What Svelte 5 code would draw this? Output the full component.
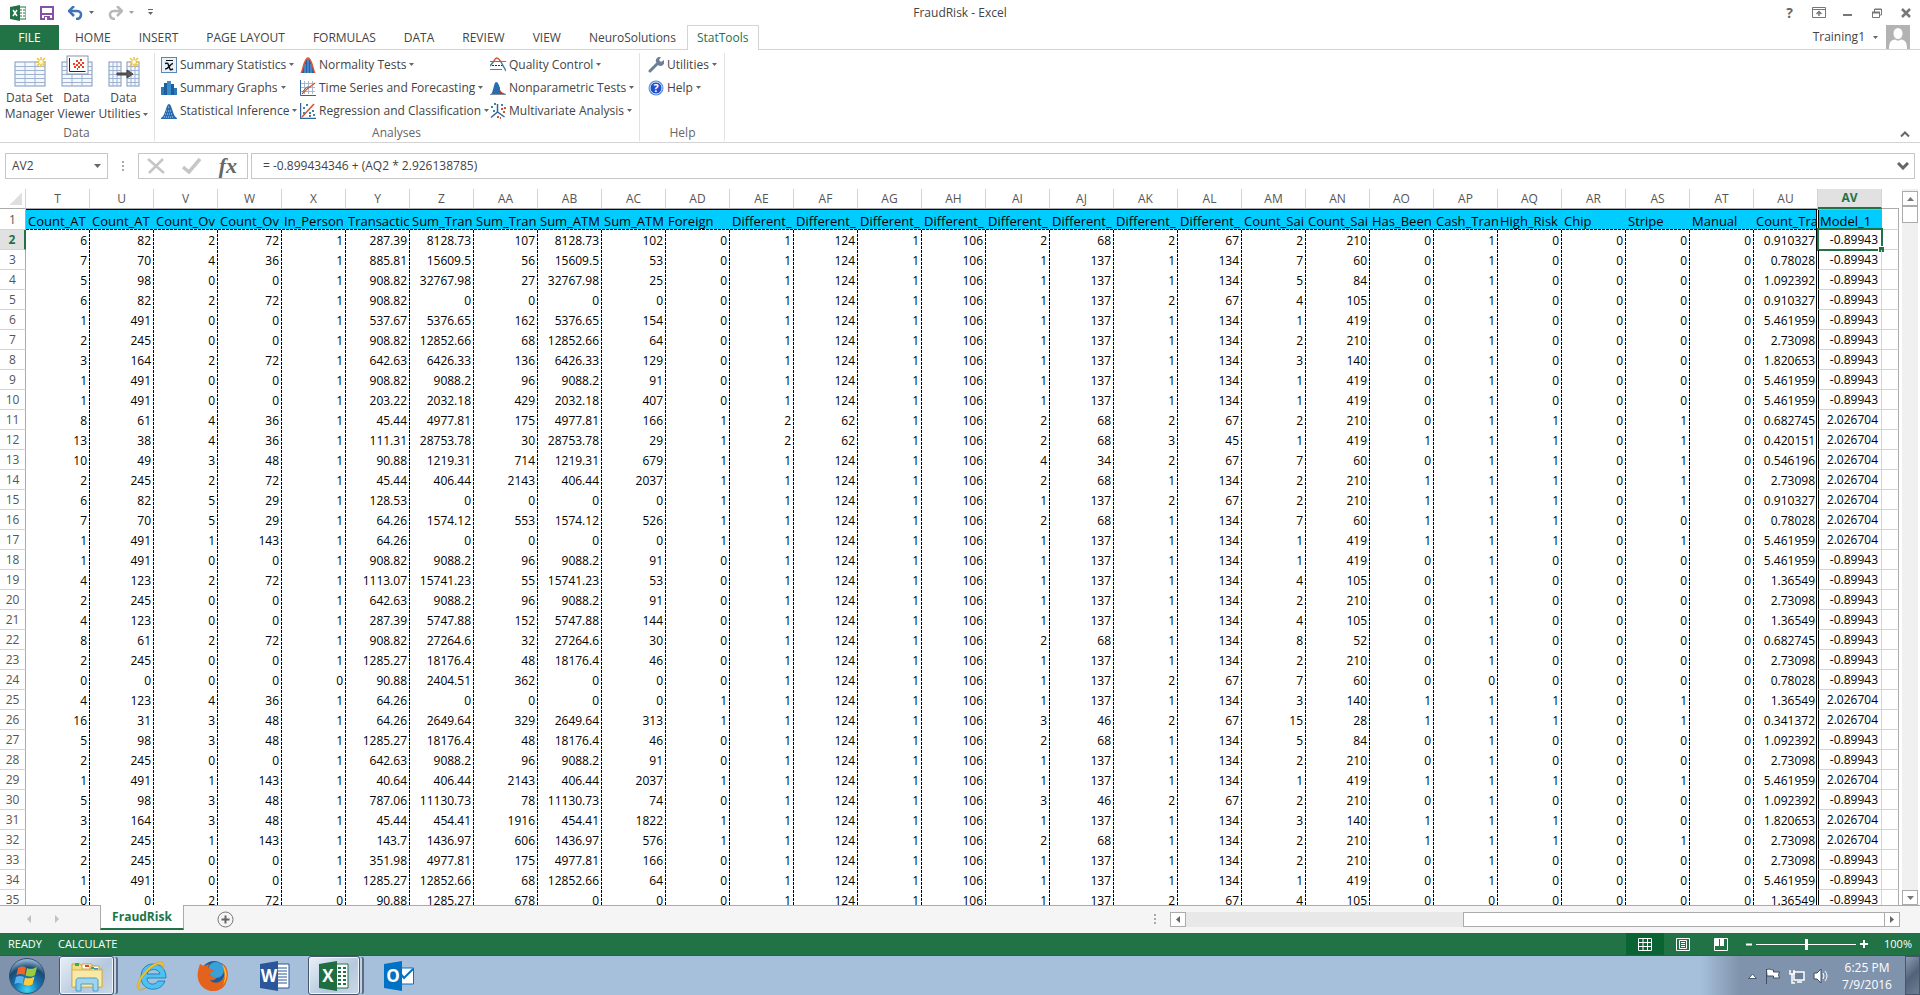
<script lang="ts">
type Tool = { label: string; icon: string };

const tabs = ['HOME', 'INSERT', 'PAGE LAYOUT', 'FORMULAS', 'DATA', 'REVIEW', 'VIEW', 'NeuroSolutions', 'StatTools'];
const activeTab = 'StatTools';

const dataTools = [
	{ lines: ['Data Set', 'Manager'], icon: 'sheet', menu: false },
	{ lines: ['Data', 'Viewer'], icon: 'viewer', menu: false },
	{ lines: ['Data', 'Utilities'], icon: 'convert', menu: true },
];

const analyses: Tool[][] = [
	[
		{ label: 'Summary Statistics', icon: 'mean' },
		{ label: 'Summary Graphs', icon: 'histogram' },
		{ label: 'Statistical Inference', icon: 'inference' },
	],
	[
		{ label: 'Normality Tests', icon: 'normal' },
		{ label: 'Time Series and Forecasting', icon: 'series' },
		{ label: 'Regression and Classification', icon: 'regression' },
	],
	[
		{ label: 'Quality Control', icon: 'quality' },
		{ label: 'Nonparametric Tests', icon: 'nonparam' },
		{ label: 'Multivariate Analysis', icon: 'multi' },
	],
];

const helpTools: Tool[] = [
	{ label: 'Utilities', icon: 'wrench' },
	{ label: 'Help', icon: 'help' },
];

const columns = 'T U V W X Y Z AA AB AC AD AE AF AG AH AI AJ AK AL AM AN AO AP AQ AR AS AT AU AV'.split(' ');
const names =
	'Count_AT Count_AT Count_Ov Count_Ov In_Person Transactic Sum_Tran Sum_Tran Sum_ATM Sum_ATM Foreign Different_ Different_ Different_ Different_ Different_ Different_ Different_ Different_ Count_Sai Count_Sai Has_Been Cash_Tran High_Risk Chip Stripe Manual Count_Tra Model_1'.split(' ');

const rows = `
6 82 2 72 1 287.39 8128.73 107 8128.73 102 0 1 124 1 106 2 68 2 67 2 210 0 1 0 0 0 0 0.910327 -0.89943
7 70 4 36 1 885.81 15609.5 56 15609.5 53 0 1 124 1 106 1 137 1 134 7 60 0 1 0 0 0 0 0.78028 -0.89943
5 98 0 0 1 908.82 32767.98 27 32767.98 25 0 1 124 1 106 1 137 1 134 5 84 0 1 0 0 0 0 1.092392 -0.89943
6 82 2 72 1 908.82 0 0 0 0 0 1 124 1 106 1 137 2 67 4 105 0 1 0 0 0 0 0.910327 -0.89943
1 491 0 0 1 537.67 5376.65 162 5376.65 154 0 1 124 1 106 1 137 1 134 1 419 0 1 0 0 0 0 5.461959 -0.89943
2 245 0 0 1 908.82 12852.66 68 12852.66 64 0 1 124 1 106 1 137 1 134 2 210 0 1 0 0 0 0 2.73098 -0.89943
3 164 2 72 1 642.63 6426.33 136 6426.33 129 0 1 124 1 106 1 137 1 134 3 140 0 1 0 0 0 0 1.820653 -0.89943
1 491 0 0 1 908.82 9088.2 96 9088.2 91 0 1 124 1 106 1 137 1 134 1 419 0 1 0 0 0 0 5.461959 -0.89943
1 491 0 0 1 203.22 2032.18 429 2032.18 407 0 1 124 1 106 1 137 1 134 1 419 0 1 0 0 0 0 5.461959 -0.89943
8 61 4 36 1 45.44 4977.81 175 4977.81 166 1 2 62 1 106 2 68 2 67 2 210 0 1 1 0 1 0 0.682745 2.026704
13 38 4 36 1 111.31 28753.78 30 28753.78 29 1 2 62 1 106 2 68 3 45 1 419 1 1 1 0 1 0 0.420151 2.026704
10 49 3 48 1 90.88 1219.31 714 1219.31 679 1 1 124 1 106 4 34 2 67 7 60 0 1 1 0 1 0 0.546196 2.026704
2 245 2 72 1 45.44 406.44 2143 406.44 2037 1 1 124 1 106 2 68 1 134 2 210 1 1 1 0 1 0 2.73098 2.026704
6 82 5 29 1 128.53 0 0 0 0 1 1 124 1 106 1 137 2 67 2 210 1 1 1 0 1 0 0.910327 2.026704
7 70 5 29 1 64.26 1574.12 553 1574.12 526 1 1 124 1 106 2 68 1 134 7 60 1 1 1 0 0 0 0.78028 2.026704
1 491 1 143 1 64.26 0 0 0 0 1 1 124 1 106 1 137 1 134 1 419 1 1 1 0 1 0 5.461959 2.026704
1 491 0 0 1 908.82 9088.2 96 9088.2 91 0 1 124 1 106 1 137 1 134 1 419 0 1 0 0 0 0 5.461959 -0.89943
4 123 2 72 1 1113.07 15741.23 55 15741.23 53 0 1 124 1 106 1 137 1 134 4 105 0 1 0 0 0 0 1.36549 -0.89943
2 245 0 0 1 642.63 9088.2 96 9088.2 91 0 1 124 1 106 1 137 1 134 2 210 0 1 0 0 0 0 2.73098 -0.89943
4 123 0 0 1 287.39 5747.88 152 5747.88 144 0 1 124 1 106 1 137 1 134 4 105 0 1 0 0 0 0 1.36549 -0.89943
8 61 2 72 1 908.82 27264.6 32 27264.6 30 0 1 124 1 106 2 68 1 134 8 52 0 1 0 0 0 0 0.682745 -0.89943
2 245 0 0 1 1285.27 18176.4 48 18176.4 46 0 1 124 1 106 1 137 1 134 2 210 0 1 0 0 0 0 2.73098 -0.89943
0 0 0 0 0 90.88 2404.51 362 0 0 0 1 124 1 106 1 137 2 67 7 60 0 0 0 0 0 0 0.78028 -0.89943
4 123 4 36 1 64.26 0 0 0 0 1 1 124 1 106 1 137 1 134 3 140 1 1 1 0 1 0 1.36549 2.026704
16 31 3 48 1 64.26 2649.64 329 2649.64 313 1 1 124 1 106 3 46 2 67 15 28 1 1 1 0 1 0 0.341372 2.026704
5 98 3 48 1 1285.27 18176.4 48 18176.4 46 0 1 124 1 106 2 68 1 134 5 84 0 1 0 0 0 0 1.092392 -0.89943
2 245 0 0 1 642.63 9088.2 96 9088.2 91 0 1 124 1 106 1 137 1 134 2 210 0 1 0 0 0 0 2.73098 -0.89943
1 491 1 143 1 40.64 406.44 2143 406.44 2037 1 1 124 1 106 1 137 1 134 1 419 1 1 1 0 1 0 5.461959 2.026704
5 98 3 48 1 787.06 11130.73 78 11130.73 74 0 1 124 1 106 3 46 2 67 2 210 0 1 0 0 0 0 1.092392 -0.89943
3 164 3 48 1 45.44 454.41 1916 454.41 1822 1 1 124 1 106 1 137 1 134 3 140 1 1 1 0 0 0 1.820653 2.026704
2 245 1 143 1 143.7 1436.97 606 1436.97 576 1 1 124 1 106 2 68 1 134 2 210 1 1 1 0 1 0 2.73098 2.026704
2 245 0 0 1 351.98 4977.81 175 4977.81 166 0 1 124 1 106 1 137 1 134 2 210 0 1 0 0 0 0 2.73098 -0.89943
1 491 0 0 1 1285.27 12852.66 68 12852.66 64 0 1 124 1 106 1 137 1 134 1 419 0 1 0 0 0 0 5.461959 -0.89943
0 0 2 72 0 90.88 1285.27 678 0 0 0 1 124 1 106 1 137 2 67 4 105 0 0 0 0 0 0 1.36549 -0.89943
`
	.trim()
	.split('\n')
	.map((line) => line.split(' '));

let selected = $state({ col: 'AV', row: 2 });
let formula = $state('= -0.899434346 + (AQ2 * 2.926138785)');
let zoom = $state(50);
const cellName = $derived(selected.col + selected.row);
</script>

{#snippet grid(x: number, w: number)}
	<rect {x} y="7" width={w} height="24" fill="#f4f8fd" stroke="#7f98bb" />
	<path
		d="M{x} 11.5h{w}M{x} 15.5h{w}M{x} 19.5h{w}M{x} 23.5h{w}M{x} 27.5h{w}M{x + w / 3} 7v24M{x + (2 * w) / 3} 7v24"
		stroke="#9fb2cf"
		fill="none"
	/>
{/snippet}

{#snippet spark(x: number)}
	<path d="M{x} 2v10M{x - 5} 7h10M{x - 4} 3l8 8M{x + 4} 3l-8 8" stroke="#f0c23a" stroke-width="1.5" />
	<circle cx={x} cy="7" r="2" fill="#fffbe0" />
{/snippet}

{#snippet bigIcon(name: string)}
	<svg class="big-icon" viewBox="0 0 32 32" aria-hidden="true">
		{#if name === 'sheet'}
			{@render grid(1, 30)}
			{@render spark(27)}
		{:else if name === 'viewer'}
			{@render grid(1, 30)}
			<rect x="6" y="1" width="21" height="18" fill="#fff" stroke="#8a93b5" />
			<path d="M8.500 3v13.500h16" fill="none" stroke="#1c1f7a" />
			<path
				d="M12 9h2M13 12h2M15 6h2M15 10h2M17 8h2M17 12h2M19 5h2M19 10h2M21 8h2M16 14h1M21 12h2"
				stroke="#ef3b1d"
				stroke-width="2"
			/>
		{:else}
			{@render grid(1, 12)}
			{@render grid(19, 12)}
			<path d="M9 18h10v-3l6 4-6 4v-3H9z" fill="#595959" stroke="#444" />
			{@render spark(26)}
		{/if}
	</svg>
{/snippet}

{#snippet icon(name: string)}
	<svg class="icon" viewBox="0 0 16 16" aria-hidden="true">
		{#if name === 'mean'}
			<rect x=".5" y=".5" width="15" height="15" fill="#e9f1fb" stroke="#5c86b5" />
			<path d="M5 3.500h7" stroke="#111" />
			<path d="M4 6.500c3-1 3 0 4 3s1 4 4 2.500M12 6.500c-3 0-4 5.500-8 5.500" fill="none" stroke="#111" stroke-width="1.500" />
		{:else if name === 'histogram'}
			<path d="M0 7h3v8H0z" fill="#2e7ab8" />
			<path d="M3 3h3v12H3z" fill="#1c5f9c" />
			<path d="M6 1h4v14H6z" fill="#3c8cc9" />
			<path d="M10 4h3v11h-3z" fill="#1c5f9c" />
			<path d="M13 8h3v7h-3z" fill="#2e7ab8" />
		{:else if name === 'inference'}
			<path d="M0 15c4-1 5-14 8-14s4 13 8 14v1H0z" fill="#2a6cb0" />
			<path d="M7 4h2M5 8h6M4 11h8M3 14h10" stroke="#b9d5ef" stroke-dasharray="1 1" />
		{:else if name === 'normal'}
			<path d="M1 16c2-2 3-14 7-14s5 12 7 14z" fill="#2364a8" />
			<path d="M5 16V7M8 16V3M11 16V7" stroke="#6ba5dc" />
			<path d="M1 16c2-2 3-15 7-15s5 13 7 15" fill="none" stroke="#e8502e" stroke-width="1.500" />
		{:else if name === 'series'}
			<path d="M4.500 1v13M8.500 1v13M12.500 1v13M1 3.500h14M1 7.500h14M1 11.500h14" stroke="#a9b9cc" />
			<path d="M.500 0v15.500H16" fill="none" stroke="#31649c" />
			<path d="M2 14l5-5 8-6" fill="none" stroke="#d9502e" stroke-width="1.200" />
			<path d="M2 12l5-5 3 0" fill="none" stroke="#3b84c4" />
		{:else if name === 'regression'}
			<path d="M.500 0v15.500H16" fill="none" stroke="#31649c" stroke-width="1.500" />
			<path d="M2 14L14 1" stroke="#d9502e" stroke-width="1.500" />
			<path d="M3 5h2M6 2h2M3 10h2M9 10h2M12 8h2M13 12h2M9 13h2" stroke="#3b84a8" stroke-width="2" />
		{:else if name === 'quality'}
			<path d="M0 4.500h16M0 12.500h12" stroke="#5d7ea3" />
			<path d="M2 8.500h12" stroke="#333" stroke-dasharray="2 1" />
			<path d="M0 9l4-5M11 5l5 9" stroke="#3b84a8" stroke-width="1.500" />
			<path d="M4 4c2-4 4-4 7 1" fill="none" stroke="#d9502e" stroke-width="1.500" />
		{:else if name === 'nonparam'}
			<path d="M1 14c2-1 3-12 5-12s3 3 4 6v6z" fill="#2a6cb0" />
			<path d="M9 7c1 4 3 6 7 7H9z" fill="#c8371a" />
			<path d="M0 14.500h16" stroke="#7d8fa5" />
		{:else if name === 'multi'}
			<path d="M7.500 1v8L1 14.500M7.500 9l7 5" fill="none" stroke="#31649c" stroke-width="1.500" />
			<path d="M1 4h2M3 8h2M4 1h2M11 2h2" stroke="#3b84a8" stroke-width="2" />
			<path d="M11 6h2M14 5h2M13 9h2M7 14h2M10 15h1" stroke="#d9502e" stroke-width="2" />
		{:else if name === 'wrench'}
			<path d="M2 14l7-7" stroke="#6c8099" stroke-width="3" stroke-linecap="round" />
			<path d="M13 0a4 4 0 0 0-5 5l2 3a4 4 0 0 0 6-5l-3 2-2-2z" fill="#6c8099" />
		{:else}
			<circle cx="8" cy="8" r="7.500" fill="#4f86e0" />
			<circle cx="8" cy="8" r="6" fill="#1f4fcb" stroke="#dfe9fb" />
			<text x="8" y="12" text-anchor="middle" font-size="11" font-weight="700" fill="#fff">?</text>
		{/if}
	</svg>
{/snippet}

{#snippet caret()}
	<svg class="caret" viewBox="0 0 5 3" aria-hidden="true"><path d="M0 0h5L2.500 3z" fill="#666" /></svg>
{/snippet}

{#snippet toolButton(tool: Tool)}
	<button class="tool">
		{@render icon(tool.icon)}
		<span>{tool.label}</span>
		{@render caret()}
	</button>
{/snippet}

{#snippet officeLogo(letter: string, dark: string, light: string)}
	<svg viewBox="0 0 30 32" width="30" height="32" aria-hidden="true">
		{#if letter === 'O'}
			<path d="M15 8h14.500v16H15z" fill="#fff" stroke={light} />
			<path d="M15 12l5 6 9-9" fill="none" stroke={light} stroke-width="2" />
		{:else}
			<path d="M15 4h14v24H15z" fill="#fff" stroke={light} />
			{#if letter === 'W'}
				<path d="M17 8h10M17 11h10M17 14h10M17 17h10M17 20h10M17 23h10" stroke={light} />
			{:else}
				<path d="M19 8h3M24 8h3M19 12h3M24 12h3M19 16h3M24 16h3M19 20h3M24 20h3M19 24h3M24 24h3" stroke={light} stroke-width="2" />
			{/if}
		{/if}
		<path d="M0 4l18-3v30L0 28z" fill={dark} />
		<text x="9" y="22" text-anchor="middle" font-size="17" font-weight="700" fill="#fff">{letter}</text>
	</svg>
{/snippet}

<div class="window">
	<header class="title-bar">
		<div class="quick">
			<svg class="icon" viewBox="0 0 16 16" aria-hidden="true">
				<path d="M9 2h7v12H9z" fill="#fff" stroke="#217346" />
				<path d="M10 5h5M10 8h5M10 11h5" stroke="#217346" stroke-dasharray="2 1" />
				<path d="M0 2l10-2v16L0 14z" fill="#217346" />
				<path d="M3 5l4 6M7 5l-4 6" stroke="#fff" stroke-width="1.500" />
			</svg>
			<button aria-label="Save">
				<svg width="14" height="14" viewBox="0 0 14 14"><path d="M1 1h12v12H1zM1 8h12" fill="none" stroke="#8550a8" stroke-width="2" /><path d="M4 10h6v4H4z" fill="#8550a8" /><path d="M5 11h2v3H5z" fill="#fff" /></svg>
			</button>
			<button class="with-caret" aria-label="Undo">
				<svg width="15" height="14" viewBox="0 0 15 14"><path d="M2 5h7c6 0 5 8-1 8" fill="none" stroke="#3f74b5" stroke-width="2.500" /><path d="M6 0L1 5l5 5" fill="none" stroke="#3f74b5" stroke-width="2.500" /></svg>
				{@render caret()}
			</button>
			<button class="with-caret faded" aria-label="Redo">
				<svg width="15" height="14" viewBox="0 0 15 14"><path d="M13 5H6c-6 0-5 8 1 8M9 0l5 5-5 5" fill="none" stroke="#8a8a8a" stroke-width="2.500" /></svg>
				{@render caret()}
			</button>
			<button aria-label="Customize Quick Access Toolbar">
				<svg width="5" height="7" viewBox="0 0 5 7"><path d="M0 .500h5" stroke="#666" /><path d="M0 3h5L2.500 6z" fill="#666" /></svg>
			</button>
		</div>
		<h1>FraudRisk - Excel</h1>
		<div class="controls">
			<button class="question" aria-label="Help">?</button>
			<button aria-label="Ribbon display options">
				<svg width="14" height="11" viewBox="0 0 14 11"><path d="M.500.500h13v10H.500zM.500 2.500h13" fill="none" stroke="#777" /><path d="M7 9V5M4.500 7L7 4.500 9.500 7" fill="none" stroke="#777" stroke-width="1.500" /></svg>
			</button>
			<button aria-label="Minimize"><svg width="10" height="11" viewBox="0 0 10 11"><path d="M0 8h9" stroke="#777" stroke-width="2" /></svg></button>
			<button aria-label="Restore">
				<svg width="10" height="10" viewBox="0 0 10 10"><path d="M.500 4.500h7v5h-7zM2.500 4V1h7v6H8M2 1.500h8" fill="none" stroke="#777" /><path d="M0 4.500h8" stroke="#777" stroke-width="2" /></svg>
			</button>
			<button aria-label="Close"><svg width="10" height="10" viewBox="0 0 10 10"><path d="M1 1l8 8M9 1L1 9" stroke="#777" stroke-width="2.500" /></svg></button>
		</div>
	</header>

	<nav class="tabs">
		<button class="file">FILE</button>
		{#each tabs as tab (tab)}
			<button class="tab" class:active={tab === activeTab}>{tab}</button>
		{/each}
		<div class="account">
			<button class="user">Training1 {@render caret()}</button>
			<svg width="24" height="24" viewBox="0 0 24 24" aria-hidden="true">
				<path d="M0 0h24v24H0z" fill="#b3b3b3" />
				<path d="M3 24c0-7 2-9 6-9.500 2 1.500 4 1.500 6 0 4 .500 6 2.500 6 9.500z" fill="#fff" />
				<ellipse cx="12" cy="8.500" rx="4.500" ry="5.500" fill="#fff" />
			</svg>
		</div>
	</nav>

	<section class="ribbon">
		<div class="group">
			<div class="big-tools">
				{#each dataTools as tool (tool.icon)}
					<button class="big">
						{@render bigIcon(tool.icon)}
						<span>{tool.lines[0]}</span>
						<span class="line">{tool.lines[1]}{#if tool.menu}{@render caret()}{/if}</span>
					</button>
				{/each}
			</div>
			<h2>Data</h2>
		</div>
		<div class="group analyses">
			<div class="tool-columns">
				{#each analyses as column, i (i)}
					<div class="tool-column">
						{#each column as tool (tool.icon)}
							{@render toolButton(tool)}
						{/each}
					</div>
				{/each}
			</div>
			<h2>Analyses</h2>
		</div>
		<div class="group help-group">
			<div class="tool-column">
				{#each helpTools as tool (tool.icon)}
					{@render toolButton(tool)}
				{/each}
			</div>
			<h2>Help</h2>
		</div>
		<button class="collapse" aria-label="Collapse the ribbon">
			<svg width="10" height="6" viewBox="0 0 10 6"><path d="M1 5.500l4-4 4 4" fill="none" stroke="#666" stroke-width="2" /></svg>
		</button>
	</section>

	<div class="formula-bar">
		<div class="name-box">
			<input aria-label="Name box" value={cellName} />
			<svg width="7" height="4" viewBox="0 0 7 4" aria-hidden="true"><path d="M0 0h7L3.500 4z" fill="#666" /></svg>
		</div>
		<span class="grip"></span>
		<div class="entry">
			<button aria-label="Cancel"><svg width="18" height="16" viewBox="0 0 18 16"><path d="M1 1l16 14M16 1L2 15" stroke="#c6c6c6" stroke-width="2.500" /></svg></button>
			<button aria-label="Enter"><svg width="19" height="16" viewBox="0 0 19 16"><path d="M1 9l6 5L18 1" fill="none" stroke="#c6c6c6" stroke-width="3.500" /></svg></button>
			<button class="fx" aria-label="Insert function">fx</button>
		</div>
		<div class="formula">
			<input aria-label="Formula" bind:value={formula} />
			<svg width="12" height="8" viewBox="0 0 12 8" aria-hidden="true"><path d="M1 1l5 5 5-5" fill="none" stroke="#666" stroke-width="3" /></svg>
		</div>
	</div>

	<main class="sheet">
		<div class="cells">
			<table>
				<colgroup>
					<col class="row-col" />
					{#each columns as c (c)}<col class="data-col" />{/each}
					<col />
				</colgroup>
				<thead>
					<tr>
						<th class="corner" aria-label="Select all"></th>
						{#each columns as c (c)}
							<th class:current={c === selected.col}>{c}</th>
						{/each}
						<th class="rest"></th>
					</tr>
				</thead>
				<tbody>
					<tr class="names">
						<th>1</th>
						{#each names as name, i (i)}
							<td class:last-var={i === 27} class:model={i === 28}>{name}</td>
						{/each}
						<td class="rest"></td>
					</tr>
					{#each rows as row, r (r)}
						<tr>
							<th class:current={r + 2 === selected.row}>{r + 2}</th>
							{#each row as value, i (i)}
								<td class:last-var={i === 27} class:model={i === 28}>
									{value}
									{#if columns[i] === selected.col && r + 2 === selected.row}
										<span class="selection"></span>
									{/if}
								</td>
							{/each}
							<td class="rest"></td>
						</tr>
					{/each}
				</tbody>
			</table>
		</div>
		<div class="v-scroll">
			<button aria-label="Scroll up"><svg width="7" height="4" viewBox="0 0 7 4"><path d="M0 4h7L3.500 0z" fill="#777" /></svg></button>
			<span class="v-thumb"></span>
			<button class="down" aria-label="Scroll down"><svg width="7" height="4" viewBox="0 0 7 4"><path d="M0 0h7L3.500 4z" fill="#777" /></svg></button>
		</div>
	</main>

	<div class="sheet-bar">
		<div class="sheet-nav">
			<button aria-label="Previous sheet"><svg width="4" height="8" viewBox="0 0 4 8"><path d="M4 0v8L0 4z" fill="#c0c0c0" /></svg></button>
			<button aria-label="Next sheet"><svg width="4" height="8" viewBox="0 0 4 8"><path d="M0 0v8l4-4z" fill="#c0c0c0" /></svg></button>
		</div>
		<button class="sheet-tab">FraudRisk</button>
		<button class="add" aria-label="New sheet">
			<svg width="17" height="17" viewBox="0 0 17 17"><circle cx="8.500" cy="8.500" r="7.500" fill="none" stroke="#777" /><path d="M8.500 4.500v8M4.500 8.500h8" stroke="#666" stroke-width="2" /></svg>
		</button>
		<span class="grip bar-grip"></span>
		<div class="h-scroll">
			<button aria-label="Scroll left"><svg width="4" height="7" viewBox="0 0 4 7"><path d="M4 0v7L0 3.500z" fill="#666" /></svg></button>
			<span class="h-track"></span>
			<span class="h-thumb"></span>
			<button aria-label="Scroll right"><svg width="4" height="7" viewBox="0 0 4 7"><path d="M0 0v7l4-3.500z" fill="#666" /></svg></button>
		</div>
	</div>

	<footer class="status">
		<span>READY</span>
		<span>CALCULATE</span>
		<div class="views">
			<button class="on" aria-label="Normal view"><svg width="14" height="13" viewBox="0 0 14 13"><path d="M.500.500h13v12H.500zM.500 4.500h13M.500 8.500h13M5 0v13M9.500 0v13" fill="none" stroke="#fff" /></svg></button>
			<button aria-label="Page layout"><svg width="14" height="13" viewBox="0 0 14 13"><path d="M.500.500h13v12H.500zM3.500 2.500h7v8h-7zM5 4.500h4M5 6.500h4M5 8.500h4" fill="none" stroke="#fff" /></svg></button>
			<button aria-label="Page break preview"><svg width="14" height="13" viewBox="0 0 14 13"><path d="M.500.500h13v12H.500z" fill="none" stroke="#fff" /><path d="M1 1h4v7H1zM6 1h4v7H6z" fill="#fff" /></svg></button>
		</div>
		<div class="zoom">
			<button aria-label="Zoom out"><svg width="6" height="7" viewBox="0 0 6 7"><path d="M0 3.500h6" stroke="#fff" stroke-width="2" /></svg></button>
			<input type="range" aria-label="Zoom" min="0" max="100" bind:value={zoom} />
			<button aria-label="Zoom in"><svg width="8" height="8" viewBox="0 0 8 8"><path d="M0 4h8M4 0v8" stroke="#fff" stroke-width="2" /></svg></button>
		</div>
		<span>100%</span>
	</footer>

	<div class="taskbar">
		<button class="start" aria-label="Start">
			<svg width="38" height="38" viewBox="0 0 38 38">
				<defs>
					<radialGradient id="orb" cx="50%" cy="90%" r="85%">
						<stop offset="0" stop-color="#3fd8fb" />
						<stop offset=".4" stop-color="#1679b5" />
						<stop offset=".75" stop-color="#184a76" />
						<stop offset="1" stop-color="#8fb0cc" />
					</radialGradient>
				</defs>
				<circle cx="19" cy="19" r="17.500" fill="url(#orb)" stroke="#35506e" />
				<path d="M10 11c3-2 5-2 8-.500l-1.500 7.500c-3-1.500-5-1.500-8 0z" fill="#f0642a" />
				<path d="M19 11c3 1.500 6 1 10-1l-2 8c-3 2-6 2-9.500.500z" fill="#9ccb3b" />
				<path d="M8 20c3-1.500 5-1.500 8 0l-1.500 7c-3-1.500-5-1.500-8 0z" fill="#5ab1ec" />
				<path d="M17 20.500c3 1.500 6 1 9.500-1l-2 8c-3 1.500-6 1.500-9 0z" fill="#fccb3a" />
			</svg>
		</button>
		<button class="task open explorer" aria-label="Windows Explorer">
			<svg width="34" height="32" viewBox="0 0 34 32">
				<path d="M2 4h8l2 2h14v3h6v18H2z" fill="#f3dc85" stroke="#c7a548" />
				<path d="M12 4h10v5H12zM20 6h9v5h-9z" fill="#fff" stroke="#c7a548" />
				<path d="M5 3h4v3H5zM21 7h3v2h-3z" fill="#2fb344" />
				<path d="M15 5h4v2h-4z" fill="#d9432e" />
				<path d="M24 8h4v2h-4z" fill="#3b8ede" />
				<path d="M2 10h30v17H2z" fill="#f8e9a6" stroke="#d4b457" />
				<path d="M6 31V21c0-2 1-3 3-3h16c2 0 3 1 3 3v10h-5v-7H11v7z" fill="#9fd4ee" stroke="#4d9cc4" />
			</svg>
		</button>
		<button class="task ie" aria-label="Internet Explorer">
			<svg width="32" height="32" viewBox="0 0 32 32">
				<path d="M30 21c-4 12-24 11-24-4C6 9 11 4 18 4c8 0 13 5 13 14H12c0 7 8 8 11 3zM12 14h13c-1-6-12-6-13 0z" fill="#4cc3f2" stroke="#2482bd" />
				<path d="M28 10c2-5 1-8-2-8C17 1 3 17 2 26c0 5 4 5 9 2-5 2-8 1-7-3C6 17 18 4 25 4c2 0 3 2 3 6z" fill="#f5c52c" stroke="#c99a18" stroke-width=".500" />
			</svg>
		</button>
		<button class="task firefox" aria-label="Firefox">
			<svg width="32" height="32" viewBox="0 0 32 32">
				<circle cx="17" cy="14" r="13" fill="#1a5d9e" />
				<circle cx="19" cy="10" r="8" fill="#3aa0d8" />
				<path d="M3 4c-3 8-3 13-1 18 5 11 20 12 26 3 3-5 4-12 1-18-1-2-3-3-4-4 3 6 4 12 0 17-3 3-9 4-12 0 4 1 6-1 7-3-3 1-5-1-8-2 1-3 4-3 5-5-2-1-4-1-6-2l1-4-5 2z" fill="#e4621b" />
				<path d="M25 4c6 6 6 15 1 21 3-7 2-14-1-21z" fill="#fbc22d" />
			</svg>
		</button>
		<button class="task word" aria-label="Word">{@render officeLogo('W', '#2b579a', '#2b579a')}</button>
		<button class="task open excel" aria-label="Excel">{@render officeLogo('X', '#1e6e42', '#217346')}</button>
		<button class="task outlook" aria-label="Outlook">{@render officeLogo('O', '#0072c6', '#0072c6')}</button>
		<div class="tray">
			<button aria-label="Show hidden icons"><svg width="9" height="6" viewBox="0 0 9 6"><path d="M.500 5.500h8L4.500 1z" fill="#fff" stroke="#4a5a70" /></svg></button>
			<button aria-label="Action Center"><svg width="16" height="16" viewBox="0 0 16 16"><path d="M1.500 1v15M1.500 2c3-2 4 0 7 0v2h6l-1 3 1 3h-6V8H2z" fill="#fff" stroke="#3d4d63" /></svg></button>
			<button aria-label="Network"><svg width="16" height="16" viewBox="0 0 16 16"><path d="M5 4h10v8H5zM8 14h5" fill="#6d8099" stroke="#fff" stroke-width="1.500" /><path d="M1 2v4h4V2M3 6v9h3" fill="none" stroke="#fff" stroke-width="1.500" /></svg></button>
			<button aria-label="Volume"><svg width="16" height="16" viewBox="0 0 16 16"><path d="M1 5h3l4-4v14l-4-4H1z" fill="#fff" stroke="#3d4d63" /><path d="M10 5q2 3 0 6M12 3q4 5 0 10" fill="none" stroke="#fff" /></svg></button>
		</div>
		<div class="clock"><span>6:25 PM</span><span>7/9/2016</span></div>
		<button class="desktop" aria-label="Show desktop"></button>
	</div>
</div>

<style>
	:global(body) {
		margin: 0;
	}
	.window {
		--green: #217346;
		--line: #d4d4d4;
		--edge: #ababab;
		display: flex;
		flex-direction: column;
		height: 100vh;
		overflow: hidden;
		background: #fff;
		color: #444;
		font: 12px/16px 'Open Sans', 'Noto Sans', sans-serif;
	}
	button,
	input {
		margin: 0;
		padding: 0;
		border: 0;
		background: none;
		color: inherit;
		font: inherit;
		white-space: nowrap;
	}
	svg {
		flex: none;
		display: block;
	}
	h1,
	h2 {
		margin: 0;
		font-size: 12px;
		font-weight: 400;
	}
	.caret {
		width: 5px;
		height: 3px;
	}
	.icon {
		width: 16px;
		height: 16px;
	}

	.title-bar {
		display: grid;
		grid-template-columns: 1fr auto 1fr;
		align-items: center;
		height: 25px;
		flex: none;
	}
	.quick {
		display: flex;
		align-items: center;
		gap: 14px;
		padding-left: 10px;
	}
	.with-caret {
		display: flex;
		align-items: center;
		gap: 6px;
	}
	.faded {
		opacity: 0.6;
	}
	.controls {
		display: flex;
		justify-content: flex-end;
	}
	.controls button {
		display: grid;
		place-items: center;
		width: 29px;
	}
	.question {
		color: #666;
		font-size: 14px;
		font-weight: 700;
	}

	.tabs {
		display: flex;
		height: 25px;
		flex: none;
		box-sizing: border-box;
		box-shadow: inset 0 -1px var(--line);
	}
	.file {
		width: 59px;
		margin-right: 2px;
		background: var(--green);
		color: #fff;
	}
	.tab {
		padding: 0 14px;
	}
	.tab.active {
		margin-left: -3px;
		padding: 0 9px;
		border: 1px solid var(--line);
		border-bottom: 0;
		background: #fff;
		color: var(--green);
	}
	.account {
		display: flex;
		align-items: center;
		gap: 8px;
		margin-left: auto;
		padding: 0 10px 1px 0;
	}
	.user {
		display: flex;
		align-items: center;
		gap: 8px;
	}

	.ribbon {
		display: flex;
		flex: none;
		height: 93px;
		box-sizing: border-box;
		padding: 3px 0 1px;
		border-bottom: 1px solid var(--line);
	}
	.group {
		display: flex;
		flex-direction: column;
		justify-content: space-between;
		box-sizing: border-box;
		border-right: 1px solid #e1e1e1;
		padding: 0 7px 0 6px;
	}
	.group h2 {
		color: #666;
		text-align: center;
	}
	.big-tools {
		display: grid;
		grid-template-columns: repeat(3, 47px);
	}
	.big {
		display: flex;
		flex-direction: column;
		align-items: center;
		padding-top: 2px;
	}
	.big-icon {
		width: 32px;
		height: 32px;
		margin-bottom: 3px;
	}
	.line {
		display: flex;
		align-items: center;
		gap: 3px;
	}
	.analyses {
		width: 485px;
	}
	.tool-columns {
		display: grid;
		grid-template-columns: 139px 190px auto;
	}
	.tool-column {
		display: flex;
		flex-direction: column;
		align-items: flex-start;
	}
	.tool {
		display: flex;
		align-items: center;
		gap: 3px;
		height: 23px;
	}
	.help-group {
		width: 85px;
		padding-left: 8px;
	}
	.collapse {
		align-self: flex-end;
		margin: 0 10px 4px auto;
	}

	.formula-bar {
		display: flex;
		flex: none;
		height: 46px;
		box-sizing: border-box;
		padding: 10px 5px;
	}
	.name-box,
	.entry,
	.formula {
		display: flex;
		align-items: center;
		box-sizing: border-box;
		border: 1px solid #c6c6c6;
	}
	.name-box {
		width: 103px;
		padding: 0 6px;
	}
	.name-box input {
		flex: 1;
		min-width: 0;
	}
	.grip {
		width: 2px;
		margin: 8px 14px;
		background: repeating-linear-gradient(#aaa 0 2px, transparent 2px 4px);
	}
	.entry {
		justify-content: space-between;
		width: 110px;
		margin-right: 3px;
		padding: 0 10px 0 8px;
	}
	.fx {
		font: italic 700 22px/22px 'Liberation Serif', serif;
		color: #666;
	}
	.formula {
		flex: 1;
		padding: 0 5px 0 11px;
	}
	.formula input {
		flex: 1;
	}

	.sheet {
		display: flex;
		flex: 1;
		min-height: 0;
		gap: 3px;
		padding-right: 2px;
	}
	.cells {
		flex: 1;
		min-width: 0;
		overflow: hidden;
	}
	table {
		width: 100%;
		table-layout: fixed;
		border-spacing: 0;
		line-height: 18px;
	}
	.row-col {
		width: 26px;
	}
	.data-col {
		width: 64px;
	}
	th,
	td {
		box-sizing: border-box;
		height: 20px;
		padding: 0 2px;
		overflow: hidden;
		white-space: nowrap;
	}
	th {
		font-weight: 400;
		color: #555;
	}
	thead th {
		border-right: 1px solid var(--line);
		border-bottom: 1px solid var(--edge);
	}
	thead .corner {
		background: linear-gradient(135deg, transparent 50%, #dfdfdf 50%) 9px 3px / 13px 13px no-repeat;
	}
	thead .current {
		background: #e1e1e1;
		border-bottom: 2px solid var(--green);
	}
	tbody th {
		padding: 1px 0 0;
		border-right: 1px solid var(--edge);
		border-bottom: 1px solid var(--line);
	}
	tbody .current {
		background: #e1e1e1;
		border-right: 2px solid var(--green);
	}
	.current {
		color: var(--green);
		font-weight: 700;
	}
	td {
		padding: 2px 3px 0 0;
		color: #000;
		text-align: right;
		background: repeating-linear-gradient(#000 0 3px, transparent 3px 4px) right / 1px 100% no-repeat;
	}
	.names th {
		height: 21px;
		border-top: 1px solid #fff;
	}
	.names td {
		border-top: 1px solid #000;
		padding: 1px 0 0 2px;
		font-size: 13px;
		text-align: left;
		background:
			repeating-linear-gradient(to right, #000 0 3px, #fff 3px 4px) bottom / 100% 1px no-repeat,
			#0cf;
	}
	.last-var {
		border-right: 1px solid #fff;
		box-shadow: inset -1px 0 #000;
		background: none;
		padding-right: 2px;
	}
	.model {
		position: relative;
		overflow: visible;
		padding-top: 1px;
		border-right: 1px solid var(--line);
		border-bottom: 1px solid var(--line);
		box-shadow: inset 1px 0 #000;
		background: none;
	}
	.names .model {
		border-top-color: var(--edge);
		border-right-color: #0cf;
		border-bottom: 0;
		background: #0cf;
	}
	.rest,
	.names .rest {
		border-top: 0;
		border-right: 1px solid var(--edge);
		border-bottom: 1px solid var(--line);
		background: none;
	}
	thead .rest {
		border-bottom-color: var(--edge);
		border-right: 0;
	}
	.selection {
		position: absolute;
		inset: -2px -2px -2px -1px;
		border: 2px solid var(--green);
	}
	.selection::after {
		content: '';
		position: absolute;
		right: -3px;
		bottom: -3px;
		width: 5px;
		height: 5px;
		border: 1px solid #fff;
		border-width: 1px 0 0 1px;
		background: var(--green);
	}
	.v-scroll {
		display: flex;
		flex-direction: column;
		width: 16px;
		padding-top: 2px;
		box-sizing: border-box;
		background: #f0f0f0;
	}
	.v-scroll button,
	.h-scroll button {
		display: grid;
		place-items: center;
		flex: none;
		width: 16px;
		height: 15px;
		box-sizing: border-box;
		border: 1px solid var(--edge);
		background: #fff;
	}
	.v-thumb {
		height: 17px;
		box-sizing: border-box;
		border: 1px solid var(--edge);
		background: #fff;
	}
	.v-scroll .down {
		margin-top: auto;
	}

	.sheet-bar {
		display: flex;
		align-items: flex-start;
		flex: none;
		height: 28px;
		box-sizing: border-box;
		padding-right: 20px;
		border-top: 1px solid var(--edge);
		background: #f5f5f5;
	}
	.sheet-nav {
		display: flex;
		gap: 24px;
		width: 100px;
		box-sizing: border-box;
		padding: 9px 0 0 27px;
	}
	.sheet-tab {
		width: 84px;
		height: 25px;
		margin-top: -1px;
		box-sizing: border-box;
		border: solid var(--edge);
		border-width: 0 1px;
		border-bottom: 2px solid var(--green);
		background: #fff;
		color: var(--green);
		font-weight: 700;
	}
	.add {
		margin: 5px auto 0 33px;
	}
	.bar-grip {
		height: 10px;
	}
	.h-scroll {
		display: flex;
		width: 38vw;
		margin-top: 6px;
	}
	.h-track {
		flex: 278;
		background: #e8e8e8;
	}
	.h-thumb {
		flex: 421;
		border: 1px solid var(--edge);
		border-right: 0;
		background: #fff;
	}

	.status {
		display: flex;
		align-items: center;
		flex: none;
		height: 22px;
		gap: 16px;
		padding: 0 8px;
		background: var(--green);
		color: #fff;
		font-size: 11px;
	}
	.views {
		display: flex;
		align-self: stretch;
		margin: 0 -10px 0 auto;
	}
	.views button {
		display: grid;
		place-items: center;
		width: 38px;
	}
	.views .on {
		background: #0a6332;
	}
	.zoom {
		display: flex;
		align-items: center;
		gap: 4px;
	}
	input[type='range'] {
		appearance: none;
		width: 100px;
		height: 11px;
		background: linear-gradient(#fff, #fff) center / 100% 1px no-repeat;
	}
	input[type='range']::-webkit-slider-thumb {
		appearance: none;
		width: 3px;
		height: 11px;
		background: #fff;
	}

	.taskbar {
		display: flex;
		align-items: stretch;
		flex: none;
		height: 40px;
		box-sizing: border-box;
		border-top: 1px solid #3e4f66;
		background: #a6c0dc;
	}
	.start {
		display: grid;
		place-items: center;
		width: 59px;
		padding-right: 5px;
		background: #8093ac;
	}
	.task {
		display: grid;
		place-items: center;
		width: 62px;
	}
	.open {
		border: 1px solid #46566c;
		border-radius: 3px;
		background: linear-gradient(135deg, #e8eff7, #b5c8dd 60%, #cbd9e8);
		box-shadow:
			inset 0 0 0 1px #eef4fa,
			3px 0 0 -1px #c3d2e3,
			5px 0 0 -1px #5c6c82;
	}
	.explorer {
		width: 55px;
		margin-right: 6px;
	}
	.excel {
		width: 52px;
		margin: 0 15px 0 2px;
	}
	.outlook {
		width: 48px;
	}
	.tray {
		display: flex;
		align-items: center;
		gap: 8px;
		margin-left: auto;
		padding-left: 48px;
		background: linear-gradient(to right, #8093ac00, #8093ac 40px);
	}
	.clock {
		display: flex;
		flex-direction: column;
		justify-content: center;
		width: 76px;
		background: #8093ac;
		color: #fff;
		text-align: center;
		line-height: 17px;
	}
	.desktop {
		width: 15px;
		border: 1px solid #46566c;
		background: linear-gradient(135deg, #8d9cb0, #52627a 50%, #6e7e94);
	}
</style>
